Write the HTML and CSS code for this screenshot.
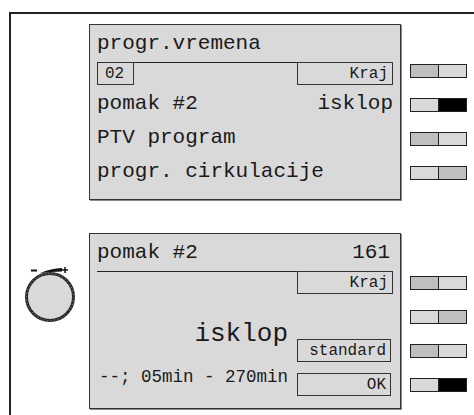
FILE: index.html
```html
<!DOCTYPE html>
<html>
	<head>
		<title>progr.vremena</title>
		<meta charset="utf-8">
		<link rel="stylesheet" href="styles.css">
	</head>
	<body>
		<div class="frame">
			<!-- menu screen -->
			<div class="unit unit-top">
				<div class="knobCol"></div>
				<div class="panel">
					<div class="title">progr.vremena</div>
					<div class="boxRow">
						<div class="box num">02</div>
						<div class="box wide">Kraj</div>
					</div>
					<div class="row first">
						<span>pomak #2</span>
						<span>isklop</span>
					</div>
					<div class="row">
						<span>PTV program</span>
					</div>
					<div class="row">
						<span>progr. cirkulacije</span>
					</div>
				</div>
				<div class="gapCol"></div>
				<div class="switches">
					<div class="switch"><span class="on"></span><span></span></div>
					<div class="switch"><span></span><span class="active"></span></div>
					<div class="switch"><span class="on"></span><span></span></div>
					<div class="switch"><span></span><span class="on"></span></div>
				</div>
			</div>

			<!-- value screen -->
			<div class="unit unit-bottom">
				<div class="knobCol">
					<svg class="knob" width="78" height="70" viewBox="0 0 78 70">
						<line x1="20" y1="8.5" x2="26" y2="8.5" stroke="#111" stroke-width="2"/>
						<path d="M29 11 Q40 6.5 51 6 L51 9.5 Q40 9.5 29 11 Z" fill="#111"/>
						<line x1="51" y1="8" x2="57" y2="8" stroke="#111" stroke-width="1.5"/>
						<line x1="54" y1="5" x2="54" y2="11" stroke="#111" stroke-width="1.5"/>
						<circle cx="39" cy="35" r="23.5" fill="#d9d9d9" stroke="#2a2a2a" stroke-width="3"/>
						<circle cx="39" cy="35" r="23.5" fill="none" stroke="#9a9a9a" stroke-width="1" stroke-dasharray="1 2.5"/>
					</svg>
				</div>
				<div class="panel">
					<div class="title split">
						<span>pomak #2</span>
						<span>161</span>
					</div>
					<div class="detail">
						<div class="readout">
							<div class="big">isklop</div>
							<div class="range">--; 05min - 270min</div>
						</div>
						<div class="boxes">
							<div class="box wide">Kraj</div>
							<div class="box wide narrow std">standard</div>
							<div class="box wide narrow ok">OK</div>
						</div>
					</div>
				</div>
				<div class="gapCol"></div>
				<div class="switches low">
					<div class="switch"><span class="on"></span><span></span></div>
					<div class="switch"><span></span><span class="on"></span></div>
					<div class="switch"><span class="on"></span><span></span></div>
					<div class="switch"><span></span><span class="active"></span></div>
				</div>
			</div>
		</div>
	</body>
</html>
```

FILE: styles.css
```css
body {
	margin:0;
	background-color:white;
	color:#1a1a1a;
	font-family:"Liberation Mono", "Courier New", monospace;
	font-size:21px;
	overflow:hidden;
}

.frame {
	margin:12px 0 0 9px;
	height:420px;
	border-top:2px solid #222;
	border-left:2px solid #222;
}

.unit {
	display:grid;
	grid-template-columns:78px 312px 9px 57px;
}
.unit-top {
	margin-top:10px;
}
.unit-bottom {
	margin-top:33px;
}

.panel {
	box-sizing:border-box;
	height:176px;
	background-color:#d9d9d9;
	border:1px solid #333;
	box-shadow:1px 1px 0 #8a8a8a;
}

.title {
	box-sizing:border-box;
	height:38px;
	line-height:37px;
	margin:0 7px;
	border-bottom:1px solid #222;
}
.split {
	display:flex;
	justify-content:space-between;
	padding-right:3px;
}

.box {
	box-sizing:border-box;
	height:23px;
	line-height:22px;
	border:1px solid #333;
	font-size:16px;
}
.num {
	width:37px;
	padding-left:7px;
}
.wide {
	width:96px;
	text-align:right;
	padding-right:4px;
}
.narrow {
	width:94px;
}

.boxRow {
	display:flex;
	justify-content:space-between;
	margin:-1px 7px 0 7px;
}

.row {
	display:flex;
	justify-content:space-between;
	height:34px;
	line-height:34px;
	margin:0 7px;
}
.row.first {
	margin-top:2px;
}

.detail {
	display:flex;
	justify-content:space-between;
	margin:-1px 7px 0 7px;
}
.readout {
	width:191px;
	display:flex;
	flex-direction:column;
	align-items:flex-end;
	white-space:nowrap;
}
.big {
	font-size:26px;
	line-height:30px;
	margin-top:48px;
}
.range {
	font-size:17.5px;
	line-height:20px;
	margin-top:18px;
}
.boxes {
	display:flex;
	flex-direction:column;
}
.std {
	margin-top:45px;
}
.ok {
	margin-top:11px;
}

.switches {
	display:flex;
	flex-direction:column;
	gap:20px;
	padding-top:40px;
}
.switches.low {
	padding-top:43px;
}
.switch {
	box-sizing:border-box;
	display:flex;
	height:14px;
	border:1px solid #222;
	background-color:#222;
	gap:1px;
}
.switch span {
	flex:1;
	background-color:#d9d9d9;
}
.switch span.on {
	background-color:#bfbfbf;
}
.switch span.active {
	background-color:#000;
}

.knob {
	display:block;
	margin-top:29px;
}
```
